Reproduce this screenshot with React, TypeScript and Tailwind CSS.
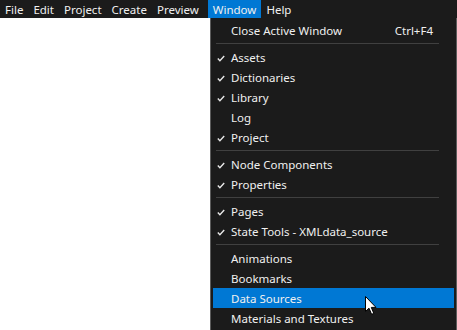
import React from "react";

const menuBar = ["File", "Edit", "Project", "Create", "Preview", "Window", "Help"];

type Item = { label: string; checked?: boolean; shortcut?: string; active?: boolean } | "sep";

const items: Item[] = [
  { label: "Close Active Window", shortcut: "Ctrl+F4" },
  "sep",
  { label: "Assets", checked: true },
  { label: "Dictionaries", checked: true },
  { label: "Library", checked: true },
  { label: "Log" },
  { label: "Project", checked: true },
  "sep",
  { label: "Node Components", checked: true },
  { label: "Properties", checked: true },
  "sep",
  { label: "Pages", checked: true },
  { label: "State Tools - XMLdata_source", checked: true },
  "sep",
  { label: "Animations" },
  { label: "Bookmarks" },
  { label: "Data Sources", active: true },
  { label: "Materials and Textures" },
];

function Check() {
  return (
    <svg width="8" height="7" viewBox="0 0 8 7" className="absolute left-[4px] top-[8px]">
      <path d="M0.8 3.6 L2.9 5.7 L7.2 1" stroke="#e8e8e8" strokeWidth="1.4" fill="none" />
    </svg>
  );
}

function Cursor() {
  return (
    <svg width="13" height="20" viewBox="0 0 13 20" className="absolute left-[152px] top-[8px]">
      <path
        d="M0.5 0.5 L0.5 15.5 L4 12.2 L6.6 18.3 L8.8 17.4 L6.3 11.4 L11 11.4 Z"
        fill="#fff"
        stroke="#000"
        strokeWidth="1"
      />
    </svg>
  );
}

export default function App() {
  return (
    <div
      className="w-[457px] h-[330px] overflow-hidden bg-white relative text-[11.5px] text-[#f0f0f0]"
      style={{ fontFamily: '"Noto Sans", "Segoe UI", sans-serif' }}
    >
      {/* menu bar */}
      <div className="h-[18px] bg-[#1b1b1b] flex items-stretch">
        {menuBar.map((m) => (
          <div
            key={m}
            className={`px-[5px] pt-[1px] flex items-center leading-none ${m === "Window" ? "bg-[#0078d4] ml-[4px]" : ""}`}
          >
            {m}
          </div>
        ))}
      </div>

      {/* dropdown */}
      <div className="absolute left-[210px] top-[18px] w-[247px] h-[330px] bg-[#1b1b1b] border-l border-r border-[#5c5c5c] pt-[2px] px-[2px]">
        {items.map((it, i) =>
          it === "sep" ? (
            <div key={i} className="h-[7px] flex items-center px-[3px]">
              <div className="h-px w-full bg-[#404040] mr-[12px]" />
            </div>
          ) : (
            <div
              key={i}
              className={`relative h-[20px] flex items-center pt-[2px] pl-[18px] pr-[21px] ${it.active ? "bg-[#0078d4]" : ""}`}
            >
              {it.checked && <Check />}
              <span className="flex-1">{it.label}</span>
              {it.shortcut && <span>{it.shortcut}</span>}
              {it.active && <Cursor />}
            </div>
          )
        )}
      </div>
    </div>
  );
}
